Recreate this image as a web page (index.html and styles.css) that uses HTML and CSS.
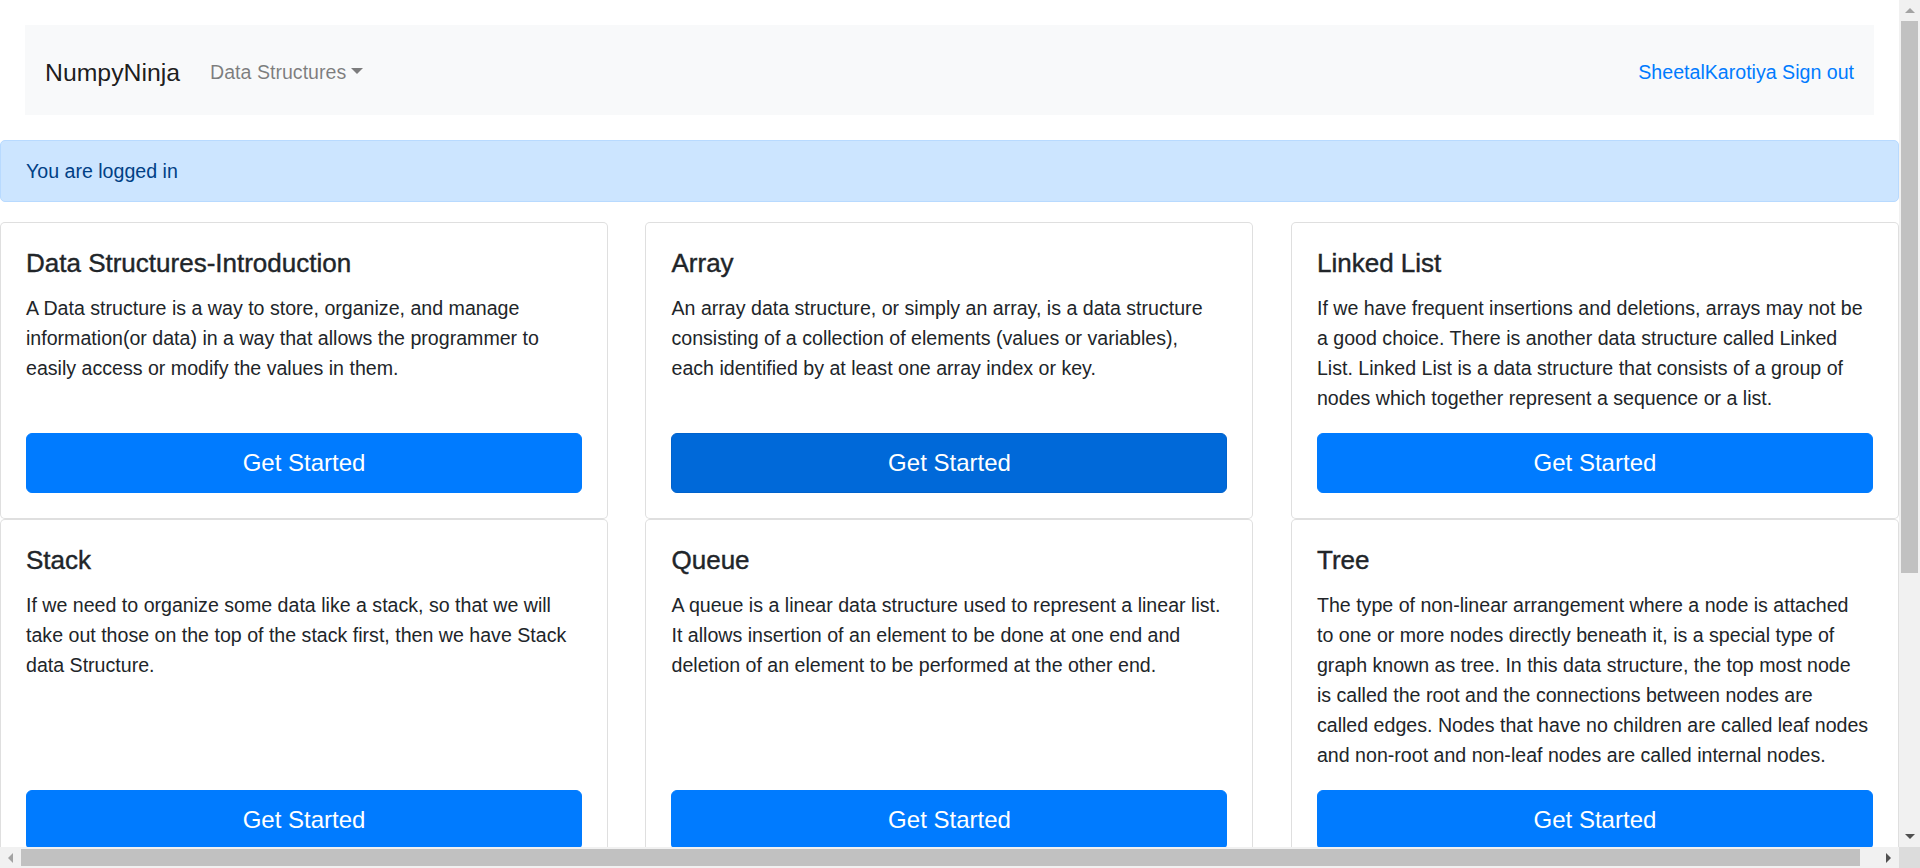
FILE: index.html
```html
<!DOCTYPE html>
<html lang="en">
<head>
<meta charset="utf-8">
<title>NumpyNinja</title>
<link rel="stylesheet" href="styles.css">
</head>
<body>
<div class="window">
  <div class="viewport">
    <nav class="navbar">
      <a class="navbar-brand" href="#">NumpyNinja</a>
      <div class="nav-item">
        <a class="nav-link dropdown-toggle" href="#">Data Structures</a>
      </div>
      <div class="user-links">
        <a class="user-link" href="#">SheetalKarotiya</a> <a class="user-link" href="#">Sign out</a>
      </div>
    </nav>

    <div class="alert">You are logged in</div>

    <main class="content">
      <div class="row">
        <div class="col">
          <div class="card">
            <div class="card-body">
              <h5 class="card-title">Data Structures-Introduction</h5>
              <p class="card-text">A Data structure is a way to store, organize, and manage<br>information(or data) in a way that allows the programmer to<br>easily access or modify the values in them.</p>
              <a class="btn" href="#">Get Started</a>
            </div>
          </div>
        </div>
        <div class="col">
          <div class="card">
            <div class="card-body">
              <h5 class="card-title">Array</h5>
              <p class="card-text">An array data structure, or simply an array, is a data structure<br>consisting of a collection of elements (values or variables),<br>each identified by at least one array index or key.</p>
              <a class="btn btn-hover" href="#">Get Started</a>
            </div>
          </div>
        </div>
        <div class="col">
          <div class="card">
            <div class="card-body">
              <h5 class="card-title">Linked List</h5>
              <p class="card-text">If we have frequent insertions and deletions, arrays may not be<br>a good choice. There is another data structure called Linked<br>List. Linked List is a data structure that consists of a group of<br>nodes which together represent a sequence or a list.</p>
              <a class="btn" href="#">Get Started</a>
            </div>
          </div>
        </div>
        <div class="col">
          <div class="card">
            <div class="card-body">
              <h5 class="card-title">Stack</h5>
              <p class="card-text">If we need to organize some data like a stack, so that we will<br>take out those on the top of the stack first, then we have Stack<br>data Structure.</p>
              <a class="btn" href="#">Get Started</a>
            </div>
          </div>
        </div>
        <div class="col">
          <div class="card">
            <div class="card-body">
              <h5 class="card-title">Queue</h5>
              <p class="card-text">A queue is a linear data structure used to represent a linear list.<br>It allows insertion of an element to be done at one end and<br>deletion of an element to be performed at the other end.</p>
              <a class="btn" href="#">Get Started</a>
            </div>
          </div>
        </div>
        <div class="col">
          <div class="card">
            <div class="card-body">
              <h5 class="card-title">Tree</h5>
              <p class="card-text">The type of non-linear arrangement where a node is attached<br>to one or more nodes directly beneath it, is a special type of<br>graph known as tree. In this data structure, the top most node<br>is called the root and the connections between nodes are<br>called edges. Nodes that have no children are called leaf nodes<br>and non-root and non-leaf nodes are called internal nodes.</p>
              <a class="btn" href="#">Get Started</a>
            </div>
          </div>
        </div>
      </div>
    </main>
  </div>

  <div class="vscroll">
    <div class="sb-btn">
      <svg width="10" height="5" viewBox="0 0 10 5"><polygon points="5,0 10,5 0,5" fill="#a3a3a3"/></svg>
    </div>
    <div class="vtrack"><div class="vthumb"></div></div>
    <div class="sb-btn">
      <svg width="10" height="5" viewBox="0 0 10 5"><polygon points="0,0 10,0 5,5" fill="#505050"/></svg>
    </div>
  </div>

  <div class="hscroll">
    <div class="sb-btn">
      <svg width="5" height="10" viewBox="0 0 5 10"><polygon points="5,0 5,10 0,5" fill="#a3a3a3"/></svg>
    </div>
    <div class="htrack"><div class="hthumb"></div></div>
    <div class="sb-btn">
      <svg width="5" height="10" viewBox="0 0 5 10"><polygon points="0,0 5,5 0,10" fill="#505050"/></svg>
    </div>
  </div>

  <div class="sb-corner"></div>
</div>
</body>
</html>
```

FILE: styles.css
```css
html,
body {
  margin: 0;
  height: 100%;
  overflow: hidden;
  background: #fff;
}

body {
  font-family: "Liberation Sans", Arial, sans-serif;
  font-size: 19.6px;
  line-height: 30px;
  color: #212529;
}

a {
  text-decoration: none;
}

/* ---------- browser window frame ---------- */
.window {
  display: grid;
  grid-template-columns: 1fr 21px;
  grid-template-rows: 1fr 21px;
  width: 100vw;
  height: 100vh;
}

.viewport {
  overflow: hidden;
  min-width: 0;
  min-height: 0;
}

.vscroll {
  display: flex;
  flex-direction: column;
  background: #f1f1f1;
}

.hscroll {
  display: flex;
  background: #f1f1f1;
}

.sb-btn {
  flex: 0 0 21px;
  height: 21px;
  display: flex;
  align-items: center;
  justify-content: center;
}

.vtrack {
  flex: 1;
  padding: 0 2px;
}

.vthumb {
  height: 552px;
  background: #c1c1c1;
}

.htrack {
  flex: 1;
  padding: 2px 0;
}

.hthumb {
  width: 1839px;
  height: 17px;
  background: #c1c1c1;
}

.sb-corner {
  background: #dcdcdc;
}

/* ---------- navbar ---------- */
.navbar {
  display: flex;
  align-items: center;
  box-sizing: border-box;
  height: 90px;
  margin: 25px;
  padding: 4px 20px 0;
  background: #f8f9fa;
}

.navbar-brand {
  font-size: 24.8px;
  line-height: 37px;
  color: rgba(0, 0, 0, 0.9);
  margin-right: 20px;
}

.nav-link {
  display: block;
  padding: 10px 10px;
  color: rgba(0, 0, 0, 0.5);
}

.dropdown-toggle::after {
  content: "";
  display: inline-block;
  margin-left: 5px;
  vertical-align: 5px;
  border-top: 6px solid;
  border-right: 6px solid transparent;
  border-left: 6px solid transparent;
}

.user-links {
  margin-left: auto;
}

.user-link {
  color: #007bff;
}

/* ---------- alert ---------- */
.alert {
  padding: 15px 25px;
  margin-bottom: 20px;
  border: 1px solid #b8daff;
  border-radius: 5px;
  background: #cce5ff;
  color: #004085;
}

/* ---------- cards ---------- */
.row {
  display: flex;
  flex-wrap: wrap;
  margin: 0 -18.75px;
}

.col {
  box-sizing: border-box;
  flex: 0 0 33.3333%;
  max-width: 33.3333%;
  padding: 0 18.75px;
}

.card {
  box-sizing: border-box;
  display: flex;
  flex-direction: column;
  height: 100%;
  border: 1px solid rgba(0, 0, 0, 0.125);
  border-radius: 5px;
  background: #fff;
}

.card-body {
  flex: 1;
  display: flex;
  flex-direction: column;
  padding: 25px;
}

.card-title {
  margin: 0 0 15px;
  font-size: 26px;
  line-height: 30px;
  font-weight: 500;
  -webkit-text-stroke: 0.4px #212529;
}

.card-text {
  margin: 0 0 20px;
  white-space: nowrap;
}

.btn {
  display: block;
  margin-top: auto;
  height: 60px;
  box-sizing: border-box;
  border: 1px solid #007bff;
  border-radius: 6px;
  background: #007bff;
  color: #fff;
  font-size: 24px;
  line-height: 57px;
  text-align: center;
}

.btn-hover {
  background: #0069d9;
  border-color: #0062cc;
}
```
